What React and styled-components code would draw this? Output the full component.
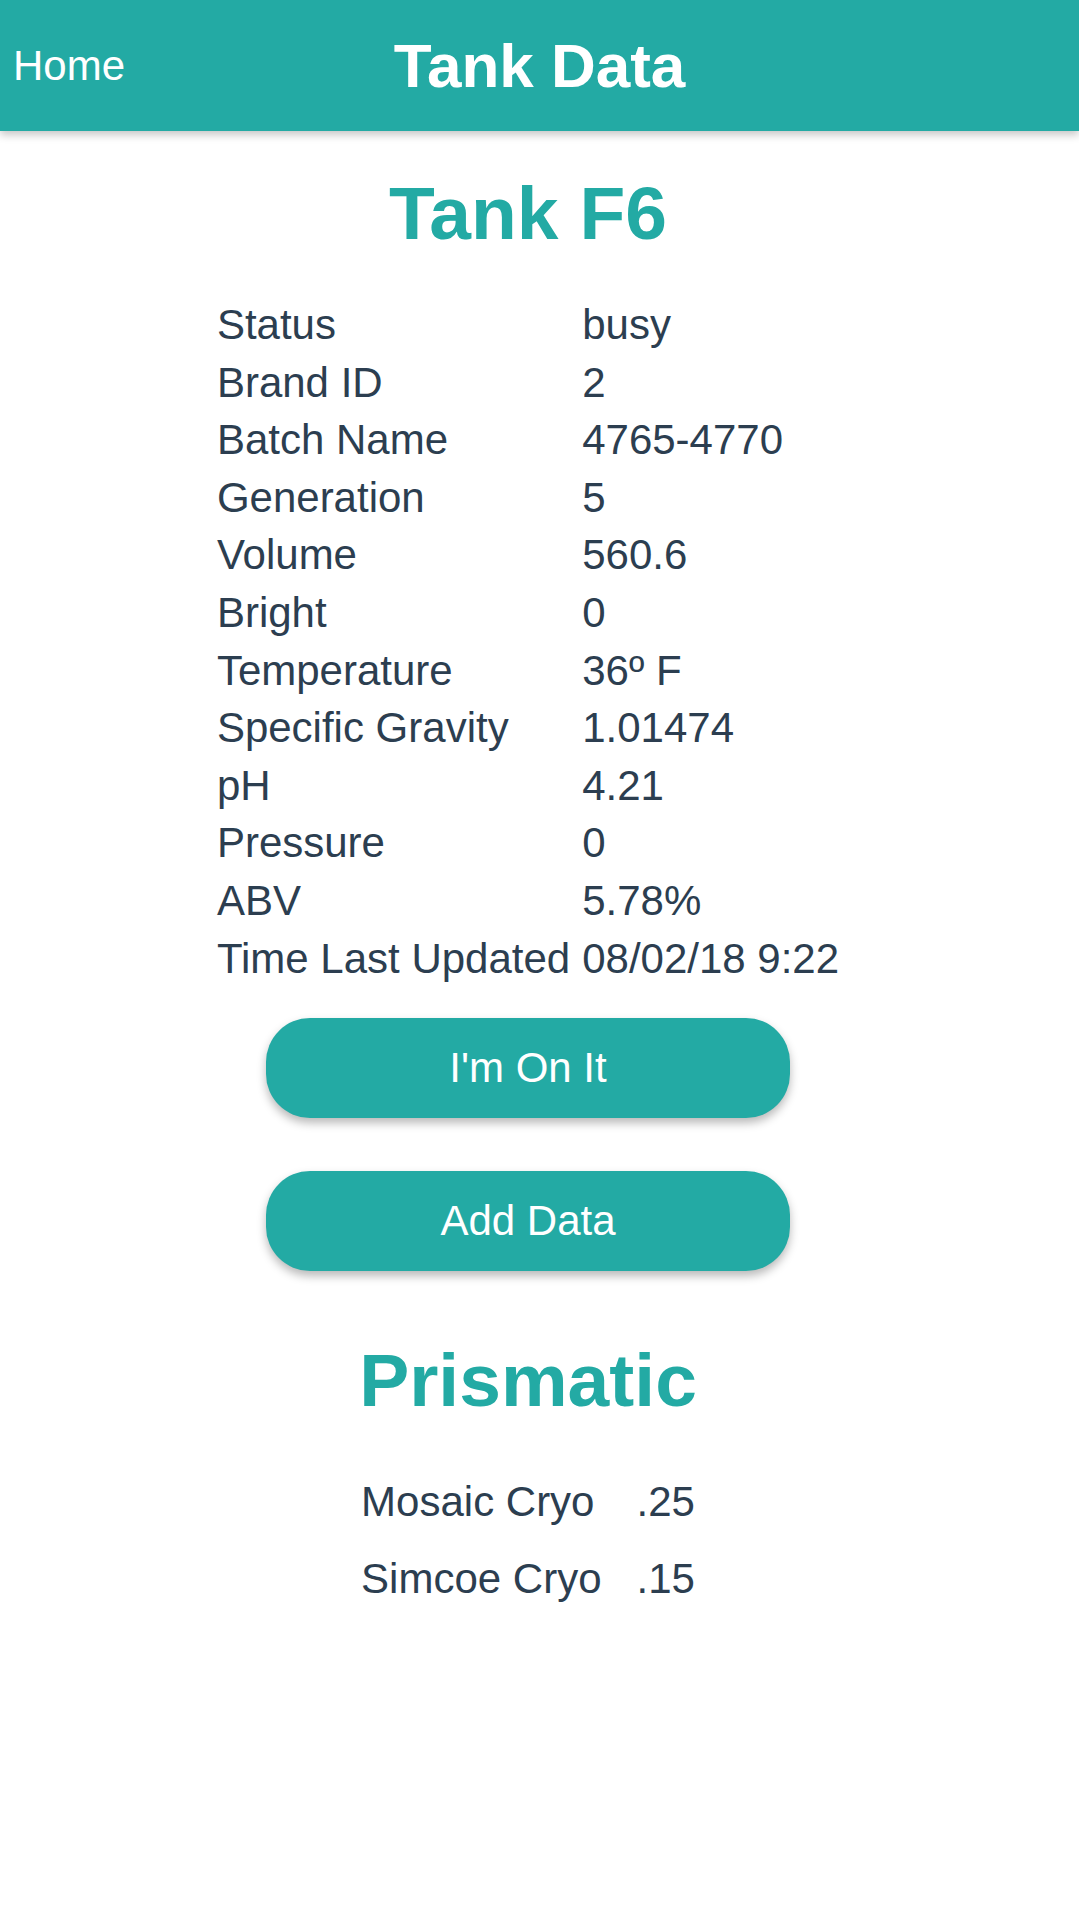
import React from "react";
import styled, { createGlobalStyle } from "styled-components";

const teal = "#23aaa4";
const ink = "#2c3e50";

const GlobalStyle = createGlobalStyle`
  body {
    margin: 0;
    background: #fff;
    font-family: "Liberation Sans", Arial, sans-serif;
    color: ${ink};
  }
`;

const Header = styled.header`
  height: 131px;
  background-color: ${teal};
  display: grid;
  grid-template-columns: 1fr auto 1fr;
  align-items: center;
  box-shadow: 0 4px 8px rgba(0, 0, 0, 0.22);
  color: white;
`;

const HomeLink = styled.a`
  justify-self: start;
  padding-left: 13px;
  font-size: 42px;
  color: white;
  text-decoration: none;
  cursor: pointer;
`;

const HeaderTitle = styled.div`
  font-size: 62px;
  font-weight: bold;
`;

const Main = styled.main`
  display: flex;
  flex-direction: column;
  align-items: center;
  padding: 39px 23px 80px 0;
`;

const Heading = styled.h1`
  margin: 0;
  font-size: 75px;
  font-weight: bold;
  color: ${teal};
`;

const DataGrid = styled.div`
  display: grid;
  grid-template-columns: auto auto;
  column-gap: ${(p) => p.gap}px;
  margin-top: 40px;
  font-size: 42px;
  line-height: ${(p) => p.row}px;
`;

const Cell = styled.div`
  white-space: nowrap;
`;

const Buttons = styled.div`
  display: flex;
  flex-direction: column;
  gap: 53px;
  margin-top: 31px;
  margin-bottom: 66px;
`;

const Button = styled.button`
  width: 524px;
  height: 100px;
  border: none;
  border-radius: 44px;
  background-color: ${teal};
  color: white;
  font-family: "Liberation Sans", Arial, sans-serif;
  font-size: 42px;
  box-shadow: 0 5px 10px rgba(0, 0, 0, 0.28);
  cursor: pointer;
`;

const tank = [
  ["Status", "busy"],
  ["Brand ID", "2"],
  ["Batch Name", "4765-4770"],
  ["Generation", "5"],
  ["Volume", "560.6"],
  ["Bright", "0"],
  ["Temperature", "36º F"],
  ["Specific Gravity", "1.01474"],
  ["pH", "4.21"],
  ["Pressure", "0"],
  ["ABV", "5.78%"],
  ["Time Last Updated", "08/02/18 9:22"],
];

const hops = [
  ["Mosaic Cryo", ".25"],
  ["Simcoe Cryo", ".15"],
];

function App() {
  return (
    <>
      <GlobalStyle />
      <Header>
        <HomeLink>Home</HomeLink>
        <HeaderTitle>Tank Data</HeaderTitle>
        <div />
      </Header>
      <Main>
        <Heading>Tank F6</Heading>
        <DataGrid gap={12} row={57.6}>
          {tank.map(([k, v]) => (
            <React.Fragment key={k}>
              <Cell>{k}</Cell>
              <Cell>{v}</Cell>
            </React.Fragment>
          ))}
        </DataGrid>
        <Buttons>
          <Button>I'm On It</Button>
          <Button>Add Data</Button>
        </Buttons>
        <Heading>Prismatic</Heading>
        <DataGrid gap={35} row={77}>
          {hops.map(([k, v]) => (
            <React.Fragment key={k}>
              <Cell>{k}</Cell>
              <Cell>{v}</Cell>
            </React.Fragment>
          ))}
        </DataGrid>
      </Main>
    </>
  );
}

export default App;
